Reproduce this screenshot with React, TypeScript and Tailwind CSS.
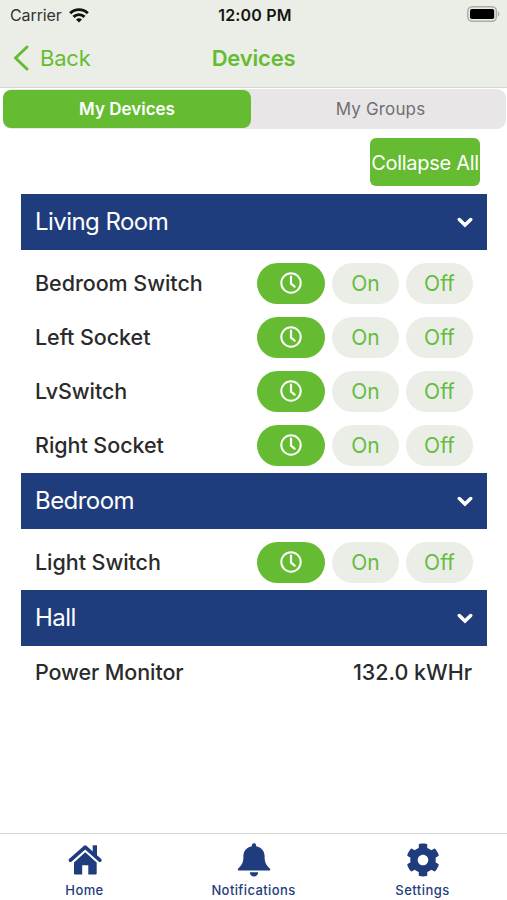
import React, { useState } from 'react';
import { FaCog } from 'react-icons/fa';

type Device = {
  name: string;
  reading?: string;
};

type Room = {
  name: string;
  devices: Device[];
};

const rooms: Room[] = [
  {
    name: 'Living Room',
    devices: [
      { name: 'Bedroom Switch' },
      { name: 'Left Socket' },
      { name: 'LvSwitch' },
      { name: 'Right Socket' },
    ],
  },
  {
    name: 'Bedroom',
    devices: [{ name: 'Light Switch' }],
  },
  {
    name: 'Hall',
    devices: [{ name: 'Power Monitor', reading: '132.0 kWHr' }],
  },
];

function ClockIcon() {
  return (
    <svg className="h-[22px] w-[22px]" viewBox="0 0 22 22" fill="none" stroke="currentColor" strokeWidth="2">
      <circle cx="11" cy="11" r="9.7" />
      <path d="M11 4.6v7l3.6 3.1" strokeWidth="2.2" strokeLinecap="round" strokeLinejoin="round" />
    </svg>
  );
}

function ChevronIcon() {
  return (
    <svg className="h-[11px] w-4" viewBox="0 0 16 11" fill="none" stroke="currentColor" strokeWidth="3.5" strokeLinecap="round">
      <path d="M2.3 2.5 8 8.1l5.7-5.6" />
    </svg>
  );
}

function HomeIcon() {
  return (
    <svg className="h-[34px] w-[34px]" viewBox="0 0 34 34" fill="currentColor">
      <path d="M24.7 2.3H29v12l-4.3-3.8Z" />
      <path d="M2.5 17.2 17.2 4.1l14.6 13.1" fill="none" stroke="currentColor" strokeWidth="3.6" strokeLinecap="round" strokeLinejoin="round" />
      <path d="m17.2 9.2 11.5 10.2v11.2c0 .5-.4.9-.9.9h-7.5v-9.2h-6.1v9.2H6.9c-.5 0-.9-.4-.9-.9V19.4Z" />
    </svg>
  );
}

function BellIcon() {
  return (
    <svg className="h-[34px] w-[34px]" viewBox="0 0 34 34" fill="currentColor">
      <path d="M17 .3c1.3 0 2.1.9 2.1 2.2v.8c5.3 1 8.5 4.8 8.5 10 0 6.300 1.500 8.700 5.200 12.200.9.900.4 2-1 2H2.200c-1.400 0-1.900-1.100-1-2 3.700-3.500 5.200-5.900 5.200-12.200 0-5.200 3.200-9 8.500-10v-.8C14.900 1.200 15.700.3 17 .3Z" />
      <path d="M12.800 29.300h8.400c0 2.500-1.900 4.200-4.200 4.200s-4.200-1.700-4.200-4.200Z" />
    </svg>
  );
}

function StatusBar() {
  return (
    <div className="flex h-[30px] items-center justify-between pl-[10px] pr-[7px] text-[#151515]">
      <div className="flex w-[100px] items-center gap-[7px]">
        <span className="text-[16px] leading-none tracking-[-0.1px] text-[#333]">Carrier</span>
        <svg className="h-[15px] w-5 shrink-0" viewBox="0 0 20 15" fill="none" stroke="#111" strokeWidth="2.9">
          <path d="M1.2 5.3a12.4 12.400 0 0 1 17.600 0" />
          <path d="M4.500 8.900a7.800 7.800 0 0 1 11 0" />
          <path d="m10 14.600-3-3a4.300 4.300 0 0 1 6 0Z" fill="#111" stroke="none" />
        </svg>
      </div>
      <span className="text-[16px] font-semibold leading-none tracking-[0.2px]">12:00 PM</span>
      <div className="flex w-[100px] justify-end pb-[2px]">
        <svg className="h-4 w-[33px]" viewBox="0 0 33 16" fill="none">
          <rect x="0.8" y="0.8" width="28.6" height="14.4" rx="4.4" stroke="#a9aca6" strokeWidth="1.5" />
          <rect x="3" y="3" width="24.2" height="10" rx="1.8" fill="#000" />
          <path d="M31 5.5c1.8.6 1.8 4.4 0 5Z" fill="#a9aca6" />
        </svg>
      </div>
    </div>
  );
}

function NavBar() {
  return (
    <div className="grid h-[55px] grid-cols-3 items-center text-[22px] leading-none text-[#65bc32]">
      <button className="flex items-center gap-[11px] pl-[13px] tracking-[-0.2px]">
        <svg className="h-[26px] w-4" viewBox="0 0 16 26" fill="none" stroke="currentColor" strokeWidth="3" strokeLinecap="round" strokeLinejoin="round">
          <path d="M14 2 2.5 13 14 24" />
        </svg>
        Back
      </button>
      <h1 className="text-center font-semibold tracking-[-0.2px]">Devices</h1>
    </div>
  );
}

function DeviceRow({ device }: { device: Device }) {
  if (device.reading) {
    return (
      <div className="flex h-[52px] items-center justify-between pl-[14px] pr-[15px] text-[21.5px] font-medium text-[#2b2b2b]">
        <span className="tracking-[-0.1px]">{device.name}</span>
        <span>{device.reading}</span>
      </div>
    );
  }

  return (
    <div className="flex h-[54px] items-center justify-between pl-[14px] pr-[14px]">
      <span className="text-[21.5px] font-medium tracking-[-0.05px] text-[#2b2b2b]">{device.name}</span>
      <div className="flex gap-[7px] text-[21px] text-[#65bc42]">
        <button className="flex h-[41px] w-[68px] items-center justify-center rounded-full bg-[#65bc32] text-white">
          <ClockIcon />
        </button>
        <button className="h-[41px] w-[67px] rounded-full bg-[#ebeee7] pt-px">On</button>
        <button className="h-[41px] w-[67px] rounded-full bg-[#ebeee7] pt-px">Off</button>
      </div>
    </div>
  );
}

function RoomSection({ room, open, onToggle }: { room: Room; open: boolean; onToggle: () => void }) {
  const hasSwitches = room.devices.some((d) => !d.reading);

  return (
    <section>
      <button
        onClick={onToggle}
        className="flex h-14 w-full items-center justify-between bg-[#1f3d7c] pl-[14px] pr-[14px] text-white"
      >
        <span className="text-[24px] tracking-[-0.55px]">{room.name}</span>
        <ChevronIcon />
      </button>
      {open && (
        <div className={hasSwitches ? 'pt-[6px] pb-px' : ''}>
          {room.devices.map((device) => (
            <DeviceRow key={device.name} device={device} />
          ))}
        </div>
      )}
    </section>
  );
}

function TabBar() {
  return (
    <nav className="grid h-[67px] grid-cols-3 border-t border-[#d8d8d8] text-[13px] font-medium leading-none text-[#1f3d7c]">
      <a className="flex flex-col items-center pt-[9px]">
        <HomeIcon />
        <span className="mt-[7px] tracking-[0.4px]">Home</span>
      </a>
      <a className="flex flex-col items-center pt-[9px]">
        <BellIcon />
        <span className="mt-[7px] tracking-[0.4px]">Notifications</span>
      </a>
      <a className="flex flex-col items-center pt-[9px]">
        <FaCog className="h-[34px] w-[34px]" />
        <span className="mt-[7px] tracking-[0.45px]">Settings</span>
      </a>
    </nav>
  );
}

export default function App() {
  const [tab, setTab] = useState<'devices' | 'groups'>('devices');
  const [closed, setClosed] = useState<string[]>([]);

  const toggleRoom = (name: string) => {
    setClosed((prev) => (prev.includes(name) ? prev.filter((n) => n !== name) : [...prev, name]));
  };

  return (
    <div className="flex h-[900px] w-[507px] flex-col overflow-hidden bg-white font-['Inter','Liberation_Sans',sans-serif]">
      <header className="h-[88px] border-b border-[#d3d5d0] bg-[#ebeee7]">
        <StatusBar />
        <NavBar />
      </header>

      {/* Segmented control */}
      <div className="ml-[3px] mr-px mt-px flex h-10 rounded-[9px] bg-[#e9e6e8] py-px text-[17px]">
        <button
          onClick={() => setTab('devices')}
          className={`w-[248px] rounded-[8px] pt-px ${tab === 'devices' ? 'bg-[#65bc32] font-semibold text-white' : 'text-[#707070]'}`}
        >
          My Devices
        </button>
        <button
          onClick={() => setTab('groups')}
          className={`flex-1 rounded-[8px] pt-px pl-1 tracking-[0.15px] ${tab === 'groups' ? 'bg-[#65bc32] font-semibold text-white' : 'text-[#707070]'}`}
        >
          My Groups
        </button>
      </div>

      <main className="flex-1 pl-[21px] pr-5 pt-[9px]">
        <div className="flex justify-end pr-[7px]">
          <button
            onClick={() => setClosed(rooms.map((r) => r.name))}
            className="flex h-12 w-[110px] items-center justify-center whitespace-nowrap rounded-[6px] bg-[#65bc32] pt-px text-[20px] tracking-[-0.3px] text-white"
          >
            Collapse All
          </button>
        </div>
        <div className="mt-2">
          {rooms.map((room) => (
            <RoomSection
              key={room.name}
              room={room}
              open={!closed.includes(room.name)}
              onToggle={() => toggleRoom(room.name)}
            />
          ))}
        </div>
      </main>

      <TabBar />
    </div>
  );
}
